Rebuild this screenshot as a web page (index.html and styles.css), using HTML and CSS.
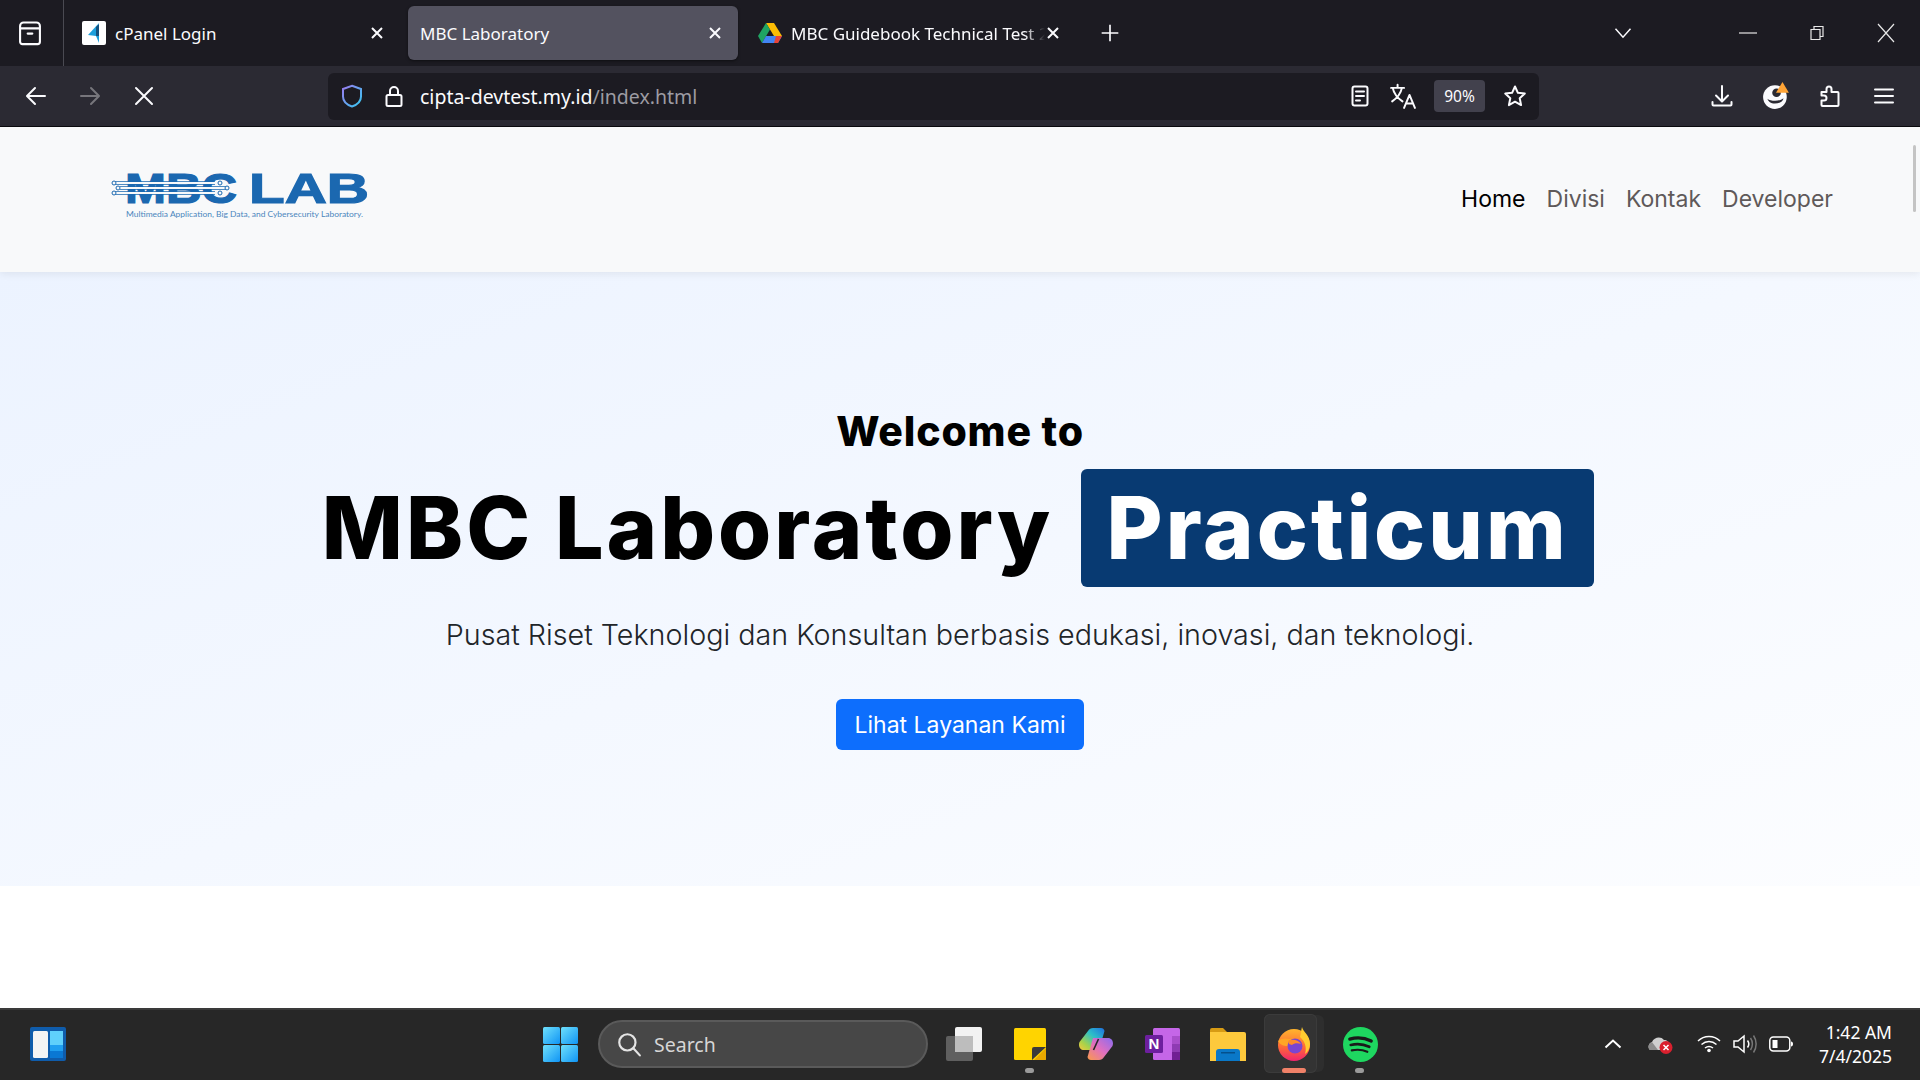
FILE: index.html
```html
<!DOCTYPE html>
<html lang="en">
<head>
<meta charset="utf-8">
<title>MBC Laboratory</title>
<link rel="stylesheet" href="styles.css">
</head>
<body>
<svg class="defs" width="0" height="0" aria-hidden="true">
  <defs>
    <linearGradient id="win" x1="0" y1="0" x2="1" y2="1"><stop offset="0" stop-color="#6fe0fb"/><stop offset="1" stop-color="#0f94f5"/></linearGradient>
    <linearGradient id="cop1" x1="1" y1="0" x2="0" y2="1"><stop offset="0" stop-color="#1f6fe0"/><stop offset=".4" stop-color="#2cc0c8"/><stop offset=".75" stop-color="#a8d24a"/><stop offset="1" stop-color="#f5c93c"/></linearGradient>
    <linearGradient id="cop2" x1="1" y1="0" x2="0" y2="1"><stop offset="0" stop-color="#8a6cf0"/><stop offset=".5" stop-color="#e06fc0"/><stop offset="1" stop-color="#fb9a4a"/></linearGradient>
    <linearGradient id="ffx" x1="0" y1="0" x2="0" y2="1"><stop offset="0" stop-color="#ffb52e"/><stop offset=".55" stop-color="#ff6a35"/><stop offset="1" stop-color="#f0246f"/></linearGradient>
    <linearGradient id="shield" x1="0" y1="0" x2="1" y2="1"><stop offset="0" stop-color="#9b7bf0"/><stop offset="1" stop-color="#35c8f0"/></linearGradient>
  </defs>
</svg>

<header class="chrome">
  <div class="tabbar">
    <div class="tabgroup">
      <svg class="ic ic-archive" viewBox="0 0 24 24"><path d="M3.500 8h17v11.500a2 2 0 0 1-2 2h-13a2 2 0 0 1-2-2zM6.500 3h11a3 3 0 0 1 3 3v2h-17V6a3 3 0 0 1 3-3zM10 12.500h4"/></svg>
    </div>
    <div class="tab">
      <svg class="fav" viewBox="0 0 24 24"><rect width="24" height="24" rx="2" fill="#fff"/><path d="M17 2 6 14l8 1z" fill="#1d9fdc"/><path d="M14 15h3V3l-3 3z" fill="#14517f"/><path d="M14 15l3 7V15z" fill="#1d9fdc"/></svg>
      <span class="tabtitle">cPanel Login</span>
      <svg class="tabx" viewBox="0 0 16 16"><path d="M3 3l10 10M13 3 3 13"/></svg>
    </div>
    <div class="tab tab-active">
      <span class="tabtitle">MBC Laboratory</span>
      <svg class="tabx" viewBox="0 0 16 16"><path d="M3 3l10 10M13 3 3 13"/></svg>
    </div>
    <div class="tab">
      <svg class="fav" viewBox="0 0 24 24"><path d="M8 2h8l8 13h-8z" fill="#fbbc04"/><path d="M8 2 0 15l4 7 8-13.500z" fill="#1fa463"/><path d="M4 22h16l4-7H8z" fill="#4285f4"/><path d="M20 22l4-7h-6l-2 7z" fill="#ea4335"/></svg>
      <span class="tabtitle tabtitle-fade">MBC Guidebook Technical Test 2</span>
      <svg class="tabx" viewBox="0 0 16 16"><path d="M3 3l10 10M13 3 3 13"/></svg>
    </div>
    <svg class="plus" viewBox="0 0 24 24"><path d="M12 2v20M2 12h20"/></svg>
    <svg class="tabs-down" viewBox="0 0 24 24"><path d="M3 7l9 10 9-10"/></svg>
    <div class="winctl">
      <svg viewBox="0 0 20 20"><path d="M1 10h18"/></svg>
      <svg viewBox="0 0 20 20"><path d="M4 6.500h9v10H4zM7 6.500V3.500h9v10h-3"/></svg>
      <svg viewBox="0 0 20 20"><path d="M2 1l16 18M18 1 2 19"/></svg>
    </div>
  </div>
  <div class="toolbar">
    <div class="tb-btn"><svg class="ic" viewBox="0 0 24 24"><path d="M21 12H3.500M11 4l-8 8 8 8"/></svg></div>
    <div class="tb-btn tb-dim"><svg class="ic" viewBox="0 0 24 24"><path d="M3 12h17.500M13 4l8 8-8 8"/></svg></div>
    <div class="tb-btn"><svg class="ic" viewBox="0 0 24 24"><path d="M4 4l16 16M20 4 4 20"/></svg></div>
    <div class="urlbar">
      <svg class="shield" viewBox="0 0 24 24"><path d="M12 1.800 21 5v7.500c0 5-4 8.300-9 10-5-1.700-9-5-9-10V5z"/></svg>
      <svg class="ic lock" viewBox="0 0 24 24"><path d="M6 11h12a1.500 1.500 0 0 1 1.500 1.500v8A1.500 1.500 0 0 1 18 22H6a1.500 1.500 0 0 1-1.500-1.500v-8A1.500 1.500 0 0 1 6 11zM8 11V7a4 4 0 0 1 8 0v4"/></svg>
      <span class="url">cipta-devtest.my.id<span class="url-dim">/index.html</span></span>
      <svg class="ic reader" viewBox="0 0 24 24"><rect x="4.500" y="2.500" width="15" height="19" rx="2"/><path d="M8 7.500h8M8 12h8M8 16.500h4"/></svg>
      <svg class="ic translate" viewBox="0 0 24 24"><path d="M1 4.500h12M7 1.500v3M2.500 4.500c1 5 4 9 9 12.500M11 4.500c-1 5-4 9-9 12.500M13 23l5-12 5 12M14.800 19h6.400"/></svg>
      <span class="zoomchip">90%</span>
      <svg class="ic star" viewBox="0 0 24 24"><path d="M12 2.500l2.900 6.300 6.900.8-5.100 4.700 1.400 6.800-6.100-3.400-6.100 3.400 1.400-6.800-5.100-4.700 6.900-.8z"/></svg>
    </div>
    <div class="tb-right">
      <div class="tb-btn"><svg class="ic" viewBox="0 0 24 24"><path d="M12 2v15M6 11.500l6 6 6-6M2.500 18v2.500a1 1 0 0 0 1 1h17a1 1 0 0 0 1-1V18"/></svg></div>
      <div class="tb-btn">
        <svg class="acct" viewBox="0 0 26 26"><circle cx="12" cy="14" r="11" fill="#fbfbfe"/><circle cx="13.500" cy="10" r="4" fill="#2b2a33"/><path d="M5 15.500c3 2.500 11 3 15-.5-.500 3-4 5-8 5s-6-2-7-4.500z" fill="#2b2a33"/><path d="M19 0l6 10H13z" fill="#ffa436"/></svg>
      </div>
      <div class="tb-btn"><svg class="ic" viewBox="0 0 24 24"><path d="M3.500 8h5V5a2.500 2.500 0 0 1 5 0v3h6a1 1 0 0 1 1 1v12a1 1 0 0 1-1 1h-15a1 1 0 0 1-1-1v-4.500H6a2.500 2.500 0 0 0 0-5H3.500z"/></svg></div>
      <div class="tb-btn"><svg class="ic" viewBox="0 0 24 24"><path d="M3 5.500h18M3 12h18M3 18.500h18"/></svg></div>
    </div>
  </div>
</header>

<main class="page">
  <nav class="navbar">
    <svg class="logo" viewBox="0 0 262 52" role="img" aria-label="MBC LAB">
      <text class="logo-big" x="15" y="35" textLength="112" lengthAdjust="spacingAndGlyphs">MBC</text>
      <text class="logo-big" x="139" y="35" textLength="120" lengthAdjust="spacingAndGlyphs">LAB</text>
      <g class="logo-wires-out"><path d="M5 15h100M10 20h107M5 25h100"/></g>
      <g class="logo-wires-in"><path d="M5 15h100M10 20h107M5 25h100"/></g>
      <g class="logo-nodes"><circle cx="4" cy="15" r="2"/><circle cx="8" cy="20" r="2"/><circle cx="4" cy="25" r="2"/><circle cx="110" cy="15" r="2"/><circle cx="117" cy="20" r="2"/><circle cx="110" cy="25" r="2"/></g>
      <text class="logo-small" x="16" y="49" textLength="237" lengthAdjust="spacingAndGlyphs">Multimedia  Application, Big Data, and Cybersecurity Laboratory.</text>
    </svg>
    <ul class="navlinks">
      <li class="navlink navlink-active">Home</li>
      <li class="navlink">Divisi</li>
      <li class="navlink">Kontak</li>
      <li class="navlink">Developer</li>
    </ul>
  </nav>
  <section class="hero">
    <h2 class="welcome">Welcome to</h2>
    <h1 class="title"><span class="title-text">MBC Laboratory</span><span class="badge">Practicum</span></h1>
    <p class="lead">Pusat Riset Teknologi dan Konsultan berbasis edukasi, inovasi, dan teknologi.</p>
    <a class="cta">Lihat Layanan Kami</a>
  </section>
  <div class="blank"></div>
  <div class="scrollthumb"></div>
</main>

<footer class="taskbar">
  <div class="widgets">
    <svg viewBox="0 0 36 34" width="36" height="34"><rect width="36" height="34" rx="2" fill="#0f5cab"/><rect x="3" y="4" width="15" height="27" rx="1.500" fill="#f4f4f4"/><rect x="20" y="4" width="13" height="14" fill="#5fd0fb"/><rect x="20" y="18" width="13" height="6" fill="#1f9ff0"/><rect x="20" y="24" width="13" height="7" fill="#0a78d4"/></svg>
  </div>
  <div class="tslot">
    <svg viewBox="0 0 35 35" width="35" height="35"><rect width="17" height="17" rx="1.500" fill="url(#win)"/><rect x="18" width="17" height="17" rx="1.500" fill="url(#win)"/><rect y="18" width="17" height="17" rx="1.500" fill="url(#win)"/><rect x="18" y="18" width="17" height="17" rx="1.500" fill="url(#win)"/></svg>
  </div>
  <div class="search">
    <svg class="search-ic" viewBox="0 0 24 24"><circle cx="10.500" cy="10.500" r="7.500"/><path d="M16 16l6 6.500"/></svg>
    <span>Search</span>
  </div>
  <div class="tslot">
    <svg viewBox="0 0 36 34" width="36" height="34"><rect y="9" width="27" height="25" rx="2" fill="#5f5f5f"/><rect x="9" width="27" height="25" rx="2" fill="#f2f2f2"/><rect x="9" y="9" width="18" height="16" fill="#bdbdbd"/></svg>
  </div>
  <div class="tslot">
    <svg viewBox="0 0 32 32" width="32" height="32"><rect width="32" height="32" rx="1.500" fill="#ffd400"/><path d="M18 32V21a2 2 0 0 1 2-2h12L18 32z" fill="#3a3a3a"/><path d="M20 32l12-12v11a1 1 0 0 1-1 1z" fill="#e8a800"/></svg>
    <i class="tdot"></i>
  </div>
  <div class="tslot">
    <svg viewBox="0 0 34 32" width="34" height="32"><path d="M14 0h8c2 0 3 1 3.500 3L20 22H5c-4 0-6-4-4.500-8L9 3c1-2 3-3 5-3z" fill="url(#cop1)"/><path d="M20 32h-8c-2 0-3-1-3.500-3L14 10h15c4 0 6 4 4.500 8L25 29c-1 2-3 3-5 3z" fill="url(#cop2)"/><path d="M19.500 11l-5 11" stroke="#272727" stroke-width="1.600" fill="none"/></svg>
  </div>
  <div class="tslot">
    <svg viewBox="0 0 35 32" width="35" height="32"><rect x="8" width="27" height="32" rx="1.500" fill="#c566e8"/><rect x="27" y="8" width="8" height="8" fill="#a94ecb"/><rect x="27" y="16" width="8" height="8" fill="#8e3bb3"/><rect x="27" y="24" width="8" height="8" fill="#701f94"/><rect y="7" width="18" height="18" rx="1.500" fill="#6d1f9e"/><text class="note-n" x="9" y="21" text-anchor="middle">N</text></svg>
  </div>
  <div class="tslot">
    <svg viewBox="0 0 36 33" width="36" height="33"><path d="M0 2a2 2 0 0 1 2-2h11l4 4H0z" fill="#d79b14"/><path d="M0 4h34a2 2 0 0 1 2 2v27H0z" fill="#fdc93c"/><path d="M6 33v-9a3 3 0 0 1 3-3h18a3 3 0 0 1 3 3v9z" fill="#0a78c8"/><rect x="11" y="24" width="14" height="1.500" fill="#04508c"/></svg>
  </div>
  <div class="tslot tslot-open">
    <svg viewBox="0 0 34 34" width="34" height="34"><circle cx="17" cy="18" r="16" fill="url(#ffx)"/><path d="M25 0c1 5 8 8 8 17 0 4-2 8-5 10 2-6 0-13-5-17 1-3 1-7 2-10z" fill="#ffcb30"/><path d="M1 14c3-3 8-3 12-2 6-2 10 1 11 7-3-2-6-3-9-1 1 3-3 3-5 1-3 0-7-1-9-5z" fill="#ffa626"/><circle cx="18" cy="19" r="7.500" fill="#7b45d0"/><path d="M11 14c3-2 10-2 13 3-3-1-7-1-9 1l-3-1z" fill="#ff8a2b"/></svg>
    <i class="tind"></i>
  </div>
  <div class="tslot">
    <svg viewBox="0 0 36 36" width="35" height="35"><circle cx="18" cy="18" r="18" fill="#1ed760"/><path class="spot1" d="M7 12.500c7-2 15-1.500 22 2"/><path class="spot2" d="M8 18.500c6-1.500 13-1 19 1.800"/><path class="spot3" d="M9 24c5-1 11-.8 16 1.500"/></svg>
    <i class="tdot"></i>
  </div>
  <div class="tray">
    <svg class="tray-caret" viewBox="0 0 18 10"><path d="M1.500 8.500 9 1.500l7.500 7"/></svg>
    <svg class="tray-cloud" viewBox="0 0 25 19" width="25" height="19"><path d="M2 15c-3-3-1-7 2-8 2-5 9-6 12-2 3 0 5 2 5 5v5z" fill="#cfcfcf"/><path d="M2 15c-3-3-1-7 2-8l6 8z" fill="#8c8c8c"/><circle cx="18" cy="12.500" r="6.500" fill="#d9202e"/><path d="M15.500 10l5 5M20.500 10l-5 5" stroke="#fff" stroke-width="1.500"/></svg>
    <svg class="tray-ic tray-wifi" viewBox="0 0 24 18"><path d="M1 6c6-6 16-6 22 0M4.500 9.500c4.500-4 10.500-4 15 0M8 13c2.500-2 5.500-2 8 0"/><circle class="fillw" cx="12" cy="15.500" r="1.800"/></svg>
    <svg class="tray-ic tray-vol" viewBox="0 0 24 20"><path d="M1 7h4l6-5v16l-6-5H1z"/><path d="M14.500 6.500c1.500 2 1.500 5 0 7"/><path class="dimw" d="M17.500 4c2.500 3.500 2.500 8.500 0 12M20.500 1.500c3.500 5 3.500 12 0 17"/></svg>
    <svg class="tray-ic tray-bat" viewBox="0 0 24 16"><rect x=".8" y="1" width="20" height="14" rx="3.500"/><rect class="fillw" x="3.500" y="4" width="5" height="8"/><path class="fillw" d="M22 5.500c1.300 0 2 1 2 2.500s-.7 2.500-2 2.500z"/></svg>
    <div class="clock"><span>1:42 AM</span><span>7/4/2025</span></div>
  </div>
</footer>
</body>
</html>
```
FILE: styles.css
```css
* { box-sizing: border-box; }
html, body { margin: 0; padding: 0; }
body { width: 1920px; height: 1080px; overflow: hidden; display: flex; flex-direction: column; background: #fff; font-family: "Noto Sans", "Open Sans", sans-serif; }
.defs { position: absolute; }
svg { display: block; flex: none; }

.chrome { flex: none; height: 127px; background: #1c1b22; border-bottom: 1px solid #0b0b0f; color: #fbfbfe; }
.ic { width: 24px; height: 24px; fill: none; stroke: #fbfbfe; stroke-width: 2; stroke-linecap: round; stroke-linejoin: round; }
.ic-archive { width: 28px; height: 28px; stroke-width: 1.800; }

.tabbar { height: 66px; display: flex; align-items: center; }
.tabgroup { flex: none; width: 64px; height: 66px; padding-left: 16px; display: flex; align-items: center; border-right: 1px solid #4a4a52; margin-right: 6px; }
.tab { flex: none; width: 330px; height: 54px; margin-right: 8px; padding: 0 15px 0 12px; border-radius: 6px; display: flex; align-items: center; }
.tab-active { background: #53525f; box-shadow: 0 1px 3px rgba(0,0,0,.5); }
.fav { width: 24px; height: 24px; margin-right: 9px; }
.tabtitle { flex: 1; min-width: 0; font-size: 17px; white-space: nowrap; overflow: hidden; color: #fbfbfe; }
.tabtitle-fade { -webkit-mask-image: linear-gradient(90deg, #000 92%, transparent); mask-image: linear-gradient(90deg, #000 92%, transparent); }
.tabx { width: 16px; height: 16px; fill: none; stroke: #fbfbfe; stroke-width: 2; }
.plus { width: 20px; height: 20px; margin-left: 16px; fill: none; stroke: #fbfbfe; stroke-width: 2; }
.tabs-down { width: 20px; height: 20px; margin-left: 493px; fill: none; stroke: #fbfbfe; stroke-width: 1.800; }
.winctl { margin-left: 105px; display: flex; gap: 49px; padding-right: 24px; }
.winctl svg { width: 20px; height: 20px; fill: none; stroke: #e8e8e8; stroke-width: 1.200; }

.toolbar { height: 60px; background: #2b2a33; display: flex; align-items: center; padding: 0 9px; }
.tb-btn { width: 54px; height: 44px; display: flex; align-items: center; justify-content: center; }
.tb-dim .ic { stroke: #77767c; }
.urlbar { width: 1211px; height: 47px; margin-left: 157px; background: #1c1b22; border-radius: 6px; display: flex; align-items: center; padding-left: 12px; }
.shield { width: 24px; height: 24px; fill: none; stroke: url(#shield); stroke-width: 2; }
.lock { margin-left: 18px; }
.url { margin-left: 14px; font-size: 19.500px; color: #fbfbfe; white-space: nowrap; width: 928px; }
.url-dim { color: #9d9ca3; }
.translate { margin-left: 18px; width: 26px; height: 26px; stroke-width: 1.800; }
.zoomchip { margin-left: 18px; width: 51px; height: 32px; background: #42414d; border-radius: 4px; font-size: 15.500px; display: flex; align-items: center; justify-content: center; }
.star { margin-left: 18px; }
.tb-right { margin-left: auto; display: flex; }
.acct { width: 28px; height: 28px; }

.page { flex: none; height: 881px; display: flex; flex-direction: column; position: relative; font-family: "Inter", sans-serif; }
.navbar { flex: none; height: 145px; background: #f8f9fa; box-shadow: 0 2px 8px rgba(0,0,0,.07); position: relative; z-index: 1; display: flex; align-items: flex-start; padding: 41px 87px 0 110px; }
.logo { width: 262px; height: 52px; overflow: visible; }
.logo-big { font-family: "Liberation Sans", sans-serif; font-weight: 700; font-size: 42px; fill: #1b68b0; stroke: #1b68b0; stroke-width: 1.200; }
.logo-small { font-family: "Lato", sans-serif; font-size: 8px; fill: #4a86bd; }
.logo-wires-out path { fill: none; stroke: #1b68b0; stroke-width: 3.400; }
.logo-wires-in path { fill: none; stroke: #f8f9fa; stroke-width: 2; }
.logo-nodes circle { fill: #f8f9fa; stroke: #1b68b0; stroke-width: 1; }
.navlinks { list-style: none; margin: 0 0 0 auto; padding: 0; display: flex; gap: 21px; height: 62px; align-items: center; }
.navlink { font-size: 23px; color: #5f5959; white-space: nowrap; }
.navlink-active { color: #000; }

.hero { flex: none; height: 614px; background: linear-gradient(160deg, #ecf3ff 0%, #fcfdff 100%); display: flex; flex-direction: column; align-items: center; padding-top: 135px; text-align: center; }
.welcome { margin: 0; font-size: 41px; letter-spacing: .8px; line-height: 48px; font-weight: 800; color: #000; }
.title { margin: 14px 4px 0 0; display: flex; align-items: center; font-size: 86px; letter-spacing: 3px; line-height: 118px; font-weight: 800; color: #000; }
.title-text { white-space: nowrap; }
.badge { margin-left: 28px; height: 118px; width: 513px; background: #083a72; color: #fff; border-radius: 6px; white-space: nowrap; text-align: center; }
.lead { margin: 28px 0 0; font-size: 28.700px; line-height: 40px; font-weight: 300; color: #212529; white-space: nowrap; }
.cta { margin-top: 44px; width: 248px; height: 51px; background: #0d6efd; color: #fff; border-radius: 6px; font-size: 23px; display: flex; align-items: center; justify-content: center; white-space: nowrap; }
.blank { flex: 1; background: #fff; }
.scrollthumb { position: absolute; left: 1913px; top: 18px; width: 3px; height: 67px; border-radius: 2px; background: #c4c4c4; z-index: 2; }

.taskbar { flex: none; height: 72px; background: #272727; border-top: 2px solid #3a3a3a; display: flex; align-items: center; padding: 0 0 2px 30px; font-family: "Noto Sans", sans-serif; }
.widgets { width: 36px; height: 34px; margin-right: 461px; }
.tslot { width: 66px; height: 68px; position: relative; display: flex; align-items: center; justify-content: center; }
.tslot-open::before { content: ""; position: absolute; left: 3px; top: 4px; width: 53px; height: 59px; border-radius: 6px; background: #333; box-shadow: inset 0 0 0 1px #3b3b3b; z-index: 1; }
.tslot-open::after { content: ""; position: absolute; left: 10px; top: 5px; width: 53px; height: 57px; border-radius: 6px; background: #2e2e2e; z-index: 0; }
.tslot-open svg { position: relative; z-index: 2; }
.tind { position: absolute; left: 21px; bottom: 5px; width: 24px; height: 5px; border-radius: 3px; background: #f08168; z-index: 2; }
.tdot { position: absolute; left: 28px; bottom: 5px; width: 9px; height: 5px; border-radius: 3px; background: #9a9a9a; }
.search { width: 330px; height: 48px; margin: 0 3px 0 5px; background: #474747; border: 2px solid #5a5a5a; border-radius: 24px; display: flex; align-items: center; padding-left: 16px; color: #d6d6d6; font-size: 19.500px; }
.search-ic { width: 26px; height: 26px; margin-right: 12px; fill: none; stroke: #e4e4e4; stroke-width: 2; stroke-linecap: round; }
.note-n { font-family: "Liberation Sans", sans-serif; font-weight: 700; font-size: 15px; fill: #fff; }
.spot1, .spot2, .spot3 { fill: none; stroke: #1a1a1a; stroke-linecap: round; }
.spot1 { stroke-width: 3.400; }
.spot2 { stroke-width: 2.800; }
.spot3 { stroke-width: 2.200; }

.tray { margin-left: 211px; display: flex; align-items: center; }
.tray-caret { width: 18px; height: 10px; margin-right: 26px; fill: none; stroke: #fff; stroke-width: 2; }
.tray-cloud { margin-right: 24px; }
.tray-ic { fill: none; stroke: #fff; stroke-width: 1.500; }
.tray-wifi { width: 24px; height: 18px; margin-right: 12px; }
.tray-vol { width: 24px; height: 20px; margin-right: 12px; }
.tray-bat { width: 24px; height: 16px; margin-right: 22px; }
.fillw { fill: #fff; stroke: none; }
.dimw { stroke: #777; }
.clock { width: 77px; display: flex; flex-direction: column; align-items: flex-end; gap: 2px; color: #fff; font-size: 17.500px; line-height: 22px; white-space: nowrap; }
```
